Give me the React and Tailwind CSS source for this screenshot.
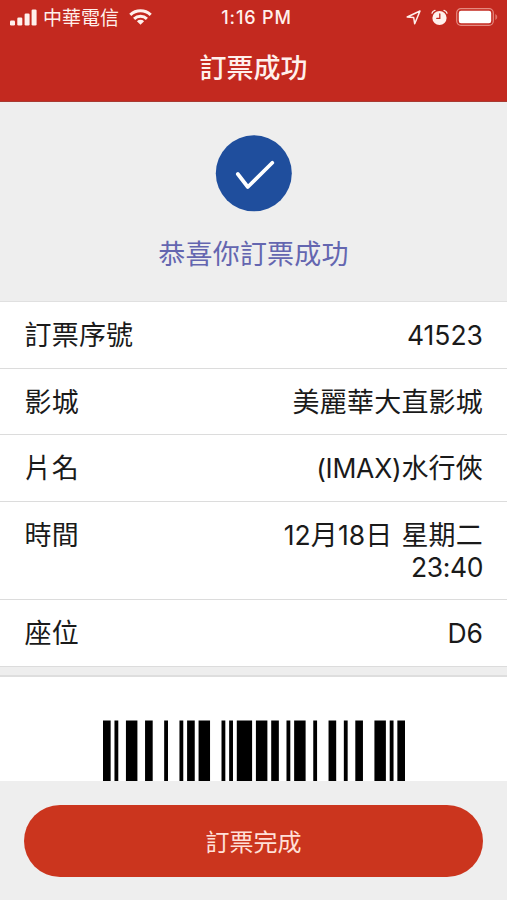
import React from 'react';

// Alternating bar / space widths, in modules
const MODULES = '211232' + '231311' + '213311' + '114131' + '221132' + '132212' + '2331112';

function Barcode() {
  let x = 0;
  const bars = [];
  MODULES.split('').forEach((c, i) => {
    const w = Number(c);
    if (i % 2 === 0) bars.push(<rect key={i} x={x} y="0.5" width={w} height="60.5" />);
    x += w;
  });
  return (
    <svg className="block h-[61px] w-[302px] fill-black" viewBox={`0 0 ${x} 61`} preserveAspectRatio="none">
      {bars}
    </svg>
  );
}

function Latin({ children, className = 'tracking-[0px]' }) {
  return <span className={`font-['Inter',sans-serif] text-[26.5px] leading-none ${className}`}>{children}</span>;
}

function Row({ label, children, className }) {
  return (
    <div className={`flex justify-between pt-[16px] pr-[24px] pl-[24.5px] text-[27px] leading-[32px] tracking-[0.2px] ${className}`}>
      <span>{label}</span>
      <span className="text-right">{children}</span>
    </div>
  );
}

function StatusBar() {
  return (
    <div className="flex h-[34px] items-center justify-between pr-[9px] pl-[10px] text-[#fff0ec]">
      <div className="flex w-[200px] items-center">
        <svg className="h-[17px] w-[27px] fill-current" viewBox="0 0 27 17">
          <rect x="0" y="11.5" width="5" height="5" rx="1.3" />
          <rect x="7.3" y="8.5" width="5" height="8" rx="1.3" />
          <rect x="14.6" y="4.5" width="5" height="12" rx="1.3" />
          <rect x="21.6" y="0.5" width="5" height="16" rx="1.3" />
        </svg>
        <span className="ml-[6px] text-[19px] leading-[28px] font-normal">中華電信</span>
        <svg className="ml-[10px] h-[16px] w-[23px]" viewBox="0 0 23 16" fill="none" stroke="currentColor" strokeWidth="3.1">
          <path d="M1.3 5.8 A15 15 0 0 1 21.7 5.8" />
          <path d="M5.1 9.8 A9.4 9.4 0 0 1 17.9 9.8" />
          <path d="M11.5 15.8 L7.9 12.3 A5.2 5.2 0 0 1 15.1 12.3 Z" fill="currentColor" stroke="none" />
        </svg>
      </div>
      <span className="ml-[5px] font-['Inter',sans-serif] text-[18px] font-medium tracking-[0.85px]">1:16 PM</span>
      <div className="flex w-[200px] items-center justify-end">
        <svg className="h-[15px] w-[15px]" viewBox="0 0 15 15" fill="none" stroke="currentColor" strokeWidth="1.5" strokeLinejoin="round">
          <path d="M14 1 L8.7 13.8 L7.7 7.5 L1.2 7 Z" />
        </svg>
        <svg className="ml-[10px] h-[17px] w-[17px]" viewBox="0 0 17 17" fill="none" stroke="currentColor" strokeLinecap="round">
          <circle cx="8.5" cy="9" r="7.1" fill="currentColor" stroke="none" />
          <path d="M1 4.2 Q1.6 1.8 4 1.3 M16 4.2 Q15.4 1.8 13 1.3" strokeWidth="1.3" />
          <path d="M8.8 5 V9.4 H5.8" stroke="#c3291f" strokeWidth="1.3" />
        </svg>
        <svg className="ml-[8px] h-[18px] w-[42px]" viewBox="0 0 42 18" fill="none">
          <rect x="0.7" y="0.7" width="36.6" height="16.6" rx="4.2" stroke="#e58a80" strokeWidth="1.2" />
          <rect x="2.8" y="2.8" width="32.4" height="12.4" rx="2.2" fill="#fff" />
          <path d="M39.3 6 Q41.3 7 41.3 9 Q41.3 11 39.3 12 Z" fill="#e0766c" />
        </svg>
      </div>
    </div>
  );
}

export default function App() {
  return (
    <div className="flex h-[900px] w-[507px] flex-col overflow-hidden bg-[#eeeeee] font-['Noto_Sans_CJK_TC',sans-serif] text-[#1a1a1a]">
      <header className="h-[102px] shrink-0 border-b border-[#a83a32] bg-[#c3291f]">
        <StatusBar />
        <h1 className="pt-[13px] text-center text-[27px] leading-[40px] font-medium text-[#fff0ec]">訂票成功</h1>
      </header>

      <section className="flex h-[200px] shrink-0 flex-col items-center border-b border-[#e0e0e0] pt-[33px]">
        <svg className="h-[77px] w-[77px]" viewBox="0 0 77 77" fill="none">
          <circle cx="38.8" cy="38.3" r="38" fill="#1f4e9d" />
          <path d="M22.8 39 L32.8 52 L57.3 27.7" stroke="#fff" strokeWidth="3.7" strokeLinecap="round" strokeLinejoin="round" />
        </svg>
        <p className="mt-[21px] text-[27px] leading-[40px] tracking-[0.2px] text-[#6466b0]">恭喜你訂票成功</p>
      </section>

      <section className="shrink-0 bg-white">
        <Row label="訂票序號" className="h-[67px] border-b border-[#dcdcdc]"><Latin>41523</Latin></Row>
        <Row label="影城" className="h-[66px] border-b border-[#dcdcdc]">美麗華大直影城</Row>
        <Row label="片名" className="h-[67px] border-b border-[#dcdcdc]"><Latin className="tracking-[-0.25px]">(IMAX)</Latin>水行俠</Row>
        <Row label="時間" className="h-[98px] border-b border-[#dcdcdc]">
          <Latin>12</Latin>月<Latin>18</Latin>日<span className="tracking-[3px]"> </span>星期二
          <br />
          <Latin className="tracking-[-0.4px]">23:40</Latin>
        </Row>
        <Row label="座位" className="h-[67px] border-b border-[#dcdcdc]"><Latin>D6</Latin></Row>
      </section>

      <section className="mt-[8px] flex h-[106px] shrink-0 items-end justify-center border-t-2 border-[#dedede] bg-white">
        <Barcode />
      </section>

      <footer className="flex-1 px-[24px] pt-[24px]">
        <button className="block h-[72px] w-full rounded-full bg-[#cb351e] text-[24px] font-normal text-[#ffe0d8]">訂票完成</button>
      </footer>
    </div>
  );
}
